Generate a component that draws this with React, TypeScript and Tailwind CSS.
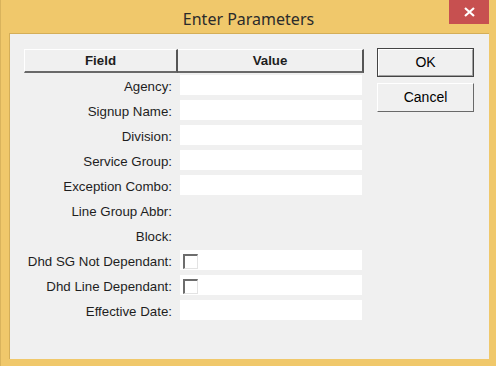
import React from "react";

const rows: { label: string; kind: "input" | "none" | "check" }[] = [
  { label: "Agency:", kind: "input" },
  { label: "Signup Name:", kind: "input" },
  { label: "Division:", kind: "input" },
  { label: "Service Group:", kind: "input" },
  { label: "Exception Combo:", kind: "input" },
  { label: "Line Group Abbr:", kind: "none" },
  { label: "Block:", kind: "none" },
  { label: "Dhd SG Not Dependant:", kind: "check" },
  { label: "Dhd Line Dependant:", kind: "check" },
  { label: "Effective Date:", kind: "input" },
];

export default function App() {
  return (
    <div
      className="w-[496px] h-[366px] bg-[#f0c86b] flex flex-col border-l border-[#d9b35c]"
      style={{ fontFamily: '"Liberation Sans", Arial, sans-serif' }}
    >
      <div className="relative h-[33px] flex items-center justify-center shrink-0">
        <span
          className="text-[16px] text-[#2b2b2b] mt-[4px]"
          style={{ fontFamily: '"Noto Sans", "Open Sans", sans-serif' }}
        >
          Enter Parameters
        </span>
        <div className="absolute top-0 right-[7px] w-[40px] h-[24px] bg-[#c75050] flex items-center justify-center">
          <svg width="11" height="10" viewBox="0 0 11 10">
            <path d="M1 1 L10 9 M10 1 L1 9" stroke="white" strokeWidth="2.2" />
          </svg>
        </div>
      </div>
      <div className="ml-[8px] mr-[7px] mb-[7px] flex-1 border-t border-l border-[#d4ae58] flex">
        <div className="flex-1 bg-[#f0f0f0] flex pl-[14px] pt-[14px] text-[13.3px] text-[#1e1e1e]">
          <div className="w-[340px] flex flex-col">
            <div className="flex h-[24px] mt-[1px]">
              <div className="w-[154px] h-full border-t border-l border-white border-b-2 border-b-[#696969] border-r-2 border-r-[#555] flex items-center justify-center font-bold">
                Field
              </div>
              <div className="w-[186px] h-full border-t border-white border-b-2 border-b-[#696969] border-r-2 border-r-[#555] flex items-center justify-center font-bold">
                Value
              </div>
            </div>
            <div className="flex flex-col gap-[5px] mt-[2px]">
              {rows.map((r) => (
                <div key={r.label} className="flex h-[20px]">
                  <div className="w-[156px] text-right pr-[8px] pt-[4px] leading-[15px] whitespace-nowrap">
                    {r.label}
                  </div>
                  {r.kind !== "none" && (
                    <div className="w-[182px] h-[20px] bg-white flex items-start">
                      {r.kind === "check" && (
                        <div className="ml-[3px] mt-[4px] w-[15px] h-[15px] bg-white border-t-2 border-l-2 border-[#6d6d6d] border-r border-b border-r-[#e3e3e3] border-b-[#e3e3e3]" />
                      )}
                    </div>
                  )}
                </div>
              ))}
            </div>
          </div>
          <div className="ml-[13px] flex flex-col gap-[6px]">
            <button className="w-[97px] h-[29px] border border-[#444] bg-[#f0f0f0] flex items-stretch">
              <span className="flex-1 border-t border-l border-white border-b border-r border-b-[#a0a0a0] border-r-[#a0a0a0] flex items-center justify-center text-[14px] text-black">
                OK
              </span>
            </button>
            <button className="w-[97px] h-[29px] border-t border-l border-white border-b border-r border-b-[#696969] border-r-[#696969] bg-[#f0f0f0] flex items-center justify-center text-[14px] text-black">
              Cancel
            </button>
          </div>
        </div>
      </div>
    </div>
  );
}
